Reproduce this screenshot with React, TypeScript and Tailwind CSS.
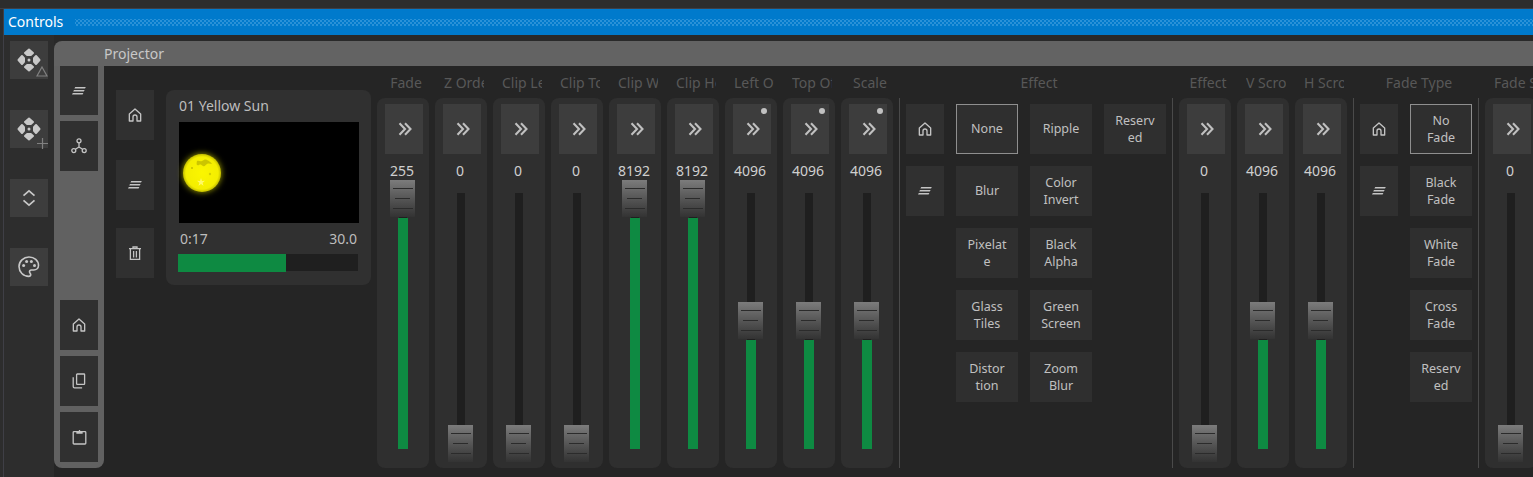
import React from "react";

const font = { fontFamily: '"Noto Sans", "Open Sans", sans-serif' };

const HomeIcon = () => (
  <svg width="16" height="16" viewBox="0 0 24 24" fill="none" stroke="currentColor" strokeWidth="2" strokeLinejoin="round">
    <path d="M3.5 10.5 12 3l8.5 7.500V21H15v-6a3 3 0 0 0-6 0v6H3.500Z" />
  </svg>
);

const LinesIcon = () => (
  <svg width="16" height="10" viewBox="0 0 16 10" fill="currentColor">
    <path d="M4.200 1h10.600l-.8 1.400H3.400Z" />
    <path d="M3 4h10.600l-.8 1.400H2.200Z" />
    <path d="M1.800 7h10.600l-.8 1.400H1Z" />
  </svg>
);

const ShareIcon = () => (
  <svg width="16" height="16" viewBox="0 0 16 16" fill="none" stroke="currentColor" strokeWidth="1.300">
    <circle cx="8" cy="2.800" r="2" />
    <circle cx="2.800" cy="12.600" r="2" />
    <circle cx="13.200" cy="12.600" r="2" />
    <path d="M8 4.800V9M8 9l-3.600 2.300M8 9l3.600 2.300" />
  </svg>
);

const TrashIcon = () => (
  <svg width="14" height="15" viewBox="0 0 14 15" fill="none" stroke="currentColor" strokeWidth="1.300">
    <path d="M1 2.700h12M5 2.500V1h4v1.500M2.400 3v10.400h9.200V3M5.600 5v6.400M8.400 5v6.400" />
  </svg>
);

const CopyIcon = () => (
  <svg width="14" height="16" viewBox="0 0 14 16" fill="none" stroke="currentColor" strokeWidth="1.300">
    <rect x="4.600" y="1" width="8" height="10.400" rx="0.600" />
    <path d="M1.200 4.200v9.400c0 .8.500 1.300 1.300 1.300h7.600" />
  </svg>
);

const ClipboardIcon = () => (
  <svg width="15" height="16" viewBox="0 0 15 16" fill="none" stroke="currentColor" strokeWidth="1.300">
    <rect x="1.200" y="2.600" width="12.600" height="12.400" rx="0.800" />
    <path d="M5 2.600h5v1.400H5Z" fill="currentColor" />
    <path d="M7.500 1v1.600" />
  </svg>
);

const ChevronsRight = () => (
  <svg width="14" height="14" viewBox="0 0 14 14" fill="none" stroke="currentColor" strokeWidth="2.100" className="ml-[1px]">
    <path d="M1.500 1.200 7 7l-5.500 5.800M7 1.200 12.500 7 7 12.800" />
  </svg>
);

const UpDownIcon = () => (
  <svg width="14" height="18" viewBox="0 0 14 18" fill="none" stroke="currentColor" strokeWidth="1.700">
    <path d="M1.500 6.600 7 1.800l5.500 4.800M1.500 11.400 7 16.200l5.500-4.800" />
  </svg>
);

const PaletteIcon = () => (
  <svg width="22" height="22" viewBox="0 0 22 22" fill="none" stroke="currentColor" strokeWidth="1.600">
    <path d="M11 1C5.500 1 1 5.300 1 10.600s4.400 9.800 9.800 9.800c1.200 0 1.900-.9 1.900-1.800 0-.6-.3-1-.6-1.400-.4-.5-.6-.9-.6-1.400 0-1 .8-1.800 1.900-1.800h2.400c2.600 0 4.700-1.900 4.700-4.400C20.500 4.500 16.300 1 11 1Z" />
    <circle cx="5.600" cy="9.500" r="1.500" fill="currentColor" stroke="none" />
    <circle cx="8.600" cy="5.500" r="1.500" fill="currentColor" stroke="none" />
    <circle cx="13.400" cy="5.500" r="1.500" fill="currentColor" stroke="none" />
    <circle cx="16.500" cy="9.500" r="1.500" fill="currentColor" stroke="none" />
  </svg>
);

const ClusterIcon = () => (
  <svg width="26" height="26" viewBox="0 0 26 26" fill="currentColor" stroke="currentColor" strokeWidth="2" strokeLinejoin="round">
    <path d="M13 2.500 17 6 14.800 8H11.200L9 6Z" />
    <path d="M13 23.500 17 20 14.800 18H11.200L9 20Z" />
    <path d="M2.500 13 6 9 8 11.200V14.800L6 17Z" />
    <path d="M23.500 13 20 9 18 11.200V14.800L20 17Z" />
    <circle cx="13" cy="13" r="1.500" stroke="none" />
  </svg>
);

const Sun = () => (
  <svg width="38" height="38" viewBox="0 0 38 38" className="shrink-0 drop-shadow-[0_0_3px_#a8a800]">
    <defs>
      <radialGradient id="sunFill">
        <stop offset="0%" stopColor="#fbf600" />
        <stop offset="85%" stopColor="#f4ee00" />
        <stop offset="100%" stopColor="#c4be00" />
      </radialGradient>
    </defs>
    <circle cx="19" cy="19" r="19" fill="url(#sunFill)" />
    <path d="M14 7c2-1 3 1 5 0s3-2 5-1 4 2 5 4c-2 0-3-1-5 0s-2 3-4 2-2-2-4-1-3 0-2-4Z" fill="#8c8400" opacity="0.4" />
    <circle cx="9" cy="14" r="1" fill="#c4be00" />
    <circle cx="27" cy="20" r="1.200" fill="#d6d000" />
    <path d="M18 24l1 3 3-.2-2.400 2 .9 3-2.500-1.700-2.500 1.700.9-3-2.400-2 3 .2Z" fill="#fff96a" />
  </svg>
);

const RailButton = ({ children }: { children: React.ReactNode }) => (
  <div className="relative flex h-[38px] w-[38px] items-center justify-center bg-[#3d3d3d] text-[#c8c8c8]">
    {children}
  </div>
);

const IconButton = ({ children, short }: { children: React.ReactNode; short?: boolean }) => (
  <div
    className={`flex w-[38px] shrink-0 items-center justify-center bg-[#303030] text-[#c4c4c4] ${short ? "h-[49px]" : "h-[50px]"}`}
  >
    {children}
  </div>
);

const Fader = ({
  label,
  value,
  pos,
  dot,
}: {
  label: string;
  value: string;
  pos: "top" | "mid" | "bottom";
  dot?: boolean;
}) => {
  const thumbTop = pos === "top" ? "top-[-13px]" : pos === "mid" ? "top-[109px]" : "top-[232px]";
  const fillHeight = pos === "top" ? "h-[231px]" : pos === "mid" ? "h-[109px]" : "h-0";
  return (
    <div className="flex w-[52px] shrink-0 flex-col pt-[8px]">
      <div className="ml-[9px] h-[18px] w-[40px] overflow-hidden whitespace-nowrap text-center text-[14px] leading-[18px] text-[#585858]">
        {label}
      </div>
      <div className="mt-[6px] h-[370px] rounded-lg bg-[#2f2f2f] pl-[8px] pt-[6px]">
        <div className="relative flex h-[50px] w-[38px] items-center justify-center bg-[#3d3d3d] text-[#c0c0c0]">
          <ChevronsRight />
          {dot && <div className="absolute right-[4px] top-[4px] h-[6px] w-[6px] rounded-full bg-[#c0c0c0]" />}
        </div>
        <div className="mt-[7px] flex h-[20px] w-[34px] justify-center whitespace-nowrap text-[14px] leading-[20px] text-[#cfcfcf]">
          {value}
        </div>
        <div className="relative ml-[14px] mt-[12px] flex h-[256px] w-[8px] flex-col justify-end bg-[#1f1f1f]">
          <div className={`ml-[-1px] w-[10px] bg-[#0e8a42] ${fillHeight}`} />
          <div
            className={`absolute left-[-9px] flex h-[37px] w-[25px] flex-col items-center gap-[9px] bg-gradient-to-b from-[#7c7c7c] to-[#333333] pt-[8px] ${thumbTop}`}
          >
            <div className="h-[1px] w-[20px] shrink-0 bg-[#2b2b2b]" />
            <div className="h-[1px] w-[15px] shrink-0 bg-[#2b2b2b]" />
            <div className="h-[1px] w-[20px] shrink-0 bg-[#2b2b2b]" />
          </div>
        </div>
      </div>
    </div>
  );
};

const TextButton = ({ lines, selected }: { lines: string[]; selected?: boolean }) => (
  <div
    className={`flex h-[50px] w-[62px] flex-col items-center justify-center bg-[#2f2f2f] text-[12.5px] leading-[17px] text-[#c0c0c0] ${selected ? "border border-[#8f8f8f]" : ""} ${lines.length === 1 ? "pb-[2px]" : ""}`}
  >
    {lines.map((l) => (
      <div key={l}>{l}</div>
    ))}
  </div>
);

const Separator = () => <div className="mt-[32px] h-[370px] w-[1px] shrink-0 bg-[#4a4a4a]" />;

const effectColumns = [
  [["None"], ["Blur"], ["Pixelat", "e"], ["Glass", "Tiles"], ["Distor", "tion"]],
  [["Ripple"], ["Color", "Invert"], ["Black", "Alpha"], ["Green", "Screen"], ["Zoom", "Blur"]],
  [["Reserv", "ed"]],
];

const fadeTypes = [["No", "Fade"], ["Black", "Fade"], ["White", "Fade"], ["Cross", "Fade"], ["Reserv", "ed"]];

const firstFaders: { label: string; value: string; pos: "top" | "mid" | "bottom"; dot?: boolean }[] = [
  { label: "Fade", value: "255", pos: "top" },
  { label: "Z Order", value: "0", pos: "bottom" },
  { label: "Clip Left", value: "0", pos: "bottom" },
  { label: "Clip Top", value: "0", pos: "bottom" },
  { label: "Clip Width", value: "8192", pos: "top" },
  { label: "Clip Height", value: "8192", pos: "top" },
  { label: "Left Offset", value: "4096", pos: "mid", dot: true },
  { label: "Top Offset", value: "4096", pos: "mid", dot: true },
  { label: "Scale", value: "4096", pos: "mid", dot: true },
];

export default function App() {
  return (
    <div className="flex h-[477px] w-[1533px] flex-col overflow-hidden bg-[#2d2d2d]" style={font}>
      <div className="h-[8px] shrink-0 bg-[#2d2d2d]" />
      <div className="h-[1px] shrink-0 bg-[#3f3f46]" />
      <div className="flex flex-1 pl-[3px]">
        <div className="w-[1px] shrink-0 bg-[#3f3f46]" />
        <div className="flex flex-1 flex-col">
          {/* title bar */}
          <div className="flex h-[26px] shrink-0 items-center bg-[#007acc] pb-[2px] pl-[4px] text-[14px] text-white">
            <span>Controls</span>
            <div className="ml-[12px] mt-[2px] h-[7px] flex-1 bg-[radial-gradient(circle,#2a92d8_0.9px,transparent_1px),radial-gradient(circle,#2a92d8_0.9px,transparent_1px)] bg-[length:4px_4px] bg-[position:0_0,2px_2px]" />
          </div>
          <div className="flex flex-1">
            {/* left rail */}
            <div className="flex w-[50px] shrink-0 flex-col gap-[31px] pl-[6px] pt-[6px]">
              <RailButton>
                <ClusterIcon />
                <svg width="12" height="11" viewBox="0 0 12 11" className="absolute bottom-[2px] right-0" fill="none" stroke="#808080" strokeWidth="1.200">
                  <path d="M6 1 11 10H1Z" />
                </svg>
              </RailButton>
              <RailButton>
                <ClusterIcon />
                <svg width="11" height="11" viewBox="0 0 11 11" className="absolute bottom-[-1px] right-0" fill="none" stroke="#808080" strokeWidth="1.200">
                  <path d="M5.500 0v11M0 5.500h11" />
                </svg>
              </RailButton>
              <RailButton>
                <UpDownIcon />
              </RailButton>
              <RailButton>
                <PaletteIcon />
              </RailButton>
            </div>
            {/* projector panel */}
            <div className="flex flex-1 flex-col bg-[#292929] pt-[6px]">
              <div className="flex h-[25px] shrink-0 items-center rounded-tl-lg bg-[#636363] pl-[50px] text-[14px] text-[#c8c8c8]">
                Projector
              </div>
              <div className="flex flex-1 bg-[#252525]">
                <div className="flex h-[402px] w-[50px] shrink-0 flex-col justify-between rounded-b-lg bg-[#616161] px-[6px] pb-[6px]">
                  <div className="flex flex-col gap-[6px]">
                    <IconButton short>
                      <LinesIcon />
                    </IconButton>
                    <IconButton>
                      <ShareIcon />
                    </IconButton>
                  </div>
                  <div className="flex flex-col gap-[6px]">
                    <IconButton>
                      <HomeIcon />
                    </IconButton>
                    <IconButton>
                      <CopyIcon />
                    </IconButton>
                    <IconButton>
                      <ClipboardIcon />
                    </IconButton>
                  </div>
                </div>
                <div className="flex flex-1 items-start overflow-hidden pl-[12px]">
                  <div className="mt-[24px] flex w-[38px] shrink-0 flex-col gap-[20px]">
                    <IconButton>
                      <HomeIcon />
                    </IconButton>
                    <IconButton>
                      <LinesIcon />
                    </IconButton>
                    <div className="mt-[-2px]">
                      <IconButton>
                        <TrashIcon />
                      </IconButton>
                    </div>
                  </div>
                  {/* clip card */}
                  <div className="ml-[12px] mr-[6px] mt-[24px] h-[195px] w-[205px] shrink-0 rounded-lg bg-[#303030] pl-[13px] pt-[6px] text-[14px] text-[#bdbdbd]">
                    <div className="h-[20px] leading-[20px]">01 Yellow Sun</div>
                    <div className="mt-[6px] flex h-[101px] w-[180px] items-center bg-black pl-[4px]">
                      <Sun />
                    </div>
                    <div className="mt-[6px] flex h-[20px] w-[178px] justify-between leading-[20px]">
                      <span className="ml-[1px]">0:17</span>
                      <span>30.0</span>
                    </div>
                    <div className="ml-[-1px] mt-[5px] h-[17px] w-[180px] bg-[#1f1f1f]">
                      <div className="h-[18px] w-[108px] bg-[#0e8a42]" />
                    </div>
                  </div>
                  <div className="flex shrink-0 gap-[6px]">
                    {firstFaders.map((f) => (
                      <Fader key={f.label} {...f} />
                    ))}
                  </div>
                  <div className="ml-[6px]">
                    <Separator />
                  </div>
                  {/* effect */}
                  <div className="ml-[6px] w-[266px] shrink-0 pt-[8px]">
                    <div className="h-[18px] text-center text-[14px] leading-[18px] text-[#585858]">Effect</div>
                    <div className="mt-[12px] flex gap-[12px]">
                      <div className="flex w-[38px] flex-col gap-[12px]">
                        <IconButton>
                          <HomeIcon />
                        </IconButton>
                        <IconButton>
                          <LinesIcon />
                        </IconButton>
                      </div>
                      {effectColumns.map((col, i) => (
                        <div key={i} className="flex flex-col gap-[12px]">
                          {col.map((lines, j) => (
                            <TextButton key={j} lines={lines} selected={i === 0 && j === 0} />
                          ))}
                        </div>
                      ))}
                    </div>
                  </div>
                  <Separator />
                  <div className="ml-[6px] flex shrink-0 gap-[6px]">
                    <Fader label="Effect" value="0" pos="bottom" />
                    <Fader label="V Scroll" value="4096" pos="mid" />
                    <Fader label="H Scroll" value="4096" pos="mid" />
                  </div>
                  <div className="ml-[6px]">
                    <Separator />
                  </div>
                  {/* fade type */}
                  <div className="ml-[6px] w-[118px] shrink-0 pt-[8px]">
                    <div className="h-[18px] text-center text-[14px] leading-[18px] text-[#585858]">Fade Type</div>
                    <div className="mt-[12px] flex gap-[12px]">
                      <div className="flex w-[38px] flex-col gap-[12px]">
                        <IconButton>
                          <HomeIcon />
                        </IconButton>
                        <IconButton>
                          <LinesIcon />
                        </IconButton>
                      </div>
                      <div className="flex flex-col gap-[12px]">
                        {fadeTypes.map((lines, j) => (
                          <TextButton key={j} lines={lines} selected={j === 0} />
                        ))}
                      </div>
                    </div>
                  </div>
                  <Separator />
                  <div className="ml-[6px] shrink-0">
                    <Fader label="Fade Speed" value="0" pos="bottom" />
                  </div>
                </div>
              </div>
            </div>
          </div>
        </div>
      </div>
    </div>
  );
}
